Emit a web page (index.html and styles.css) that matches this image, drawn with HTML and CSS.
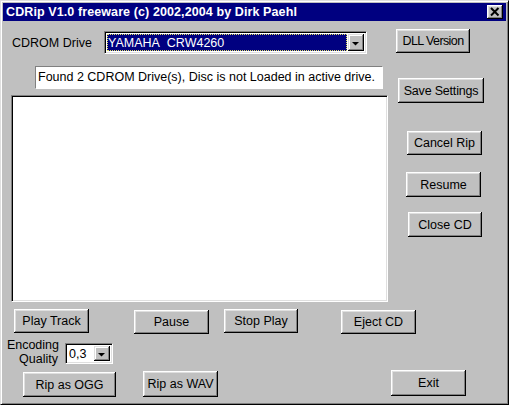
FILE: index.html
```html
<!DOCTYPE html>
<html>
<head>
<meta charset="utf-8">
<link rel="stylesheet" href="styles.css">
</head>
<body>
<div class="window">
  <div class="titlebar">
    <span class="title">CDRip V1.0 freeware (c) 2002,2004 by Dirk Paehl</span>
    <span class="close"><svg width="16" height="14" viewBox="0 0 16 14"><path d="M4 3 L11.5 10.5 M11.5 3 L4 10.5" stroke="#000" stroke-width="2" fill="none"/></svg></span>
  </div>
  <div class="client">
    <div class="top">
      <div class="leftcol">
        <div class="drive-row">
          <span class="drive-label">CDROM Drive</span>
          <div class="combo drive-combo">
            <div class="combo-field"><span class="sel">YAMAHA&nbsp; CRW4260</span></div>
            <span class="drop"><svg width="16" height="19" viewBox="0 0 16 19"><path d="M4 8 H11 L7.5 11.5 Z" fill="#000"/></svg></span>
          </div>
        </div>
        <div class="status">Found 2 CDROM Drive(s), Disc is not Loaded in active drive.</div>
        <div class="listbox"></div>
      </div>
      <div class="rightcol">
        <button class="btn btn-dll">DLL Version</button>
        <button class="btn btn-save">Save Settings</button>
        <button class="btn btn-cancel">Cancel Rip</button>
        <button class="btn btn-resume">Resume</button>
        <button class="btn btn-closecd">Close CD</button>
      </div>
    </div>
    <div class="row row-play">
      <button class="btn btn-play">Play Track</button>
      <button class="btn btn-pause">Pause</button>
      <button class="btn btn-stop">Stop Play</button>
      <button class="btn btn-eject">Eject CD</button>
    </div>
    <div class="row row-quality">
      <div class="q-label">Encoding<br><span class="q2">Quality</span></div>
      <div class="combo q-combo">
        <div class="combo-field"><span class="qval">0,3</span></div>
        <span class="drop"><svg width="16" height="17" viewBox="0 0 16 17"><path d="M4 7 H11 L7.5 10.5 Z" fill="#000"/></svg></span>
      </div>
    </div>
    <div class="row row-rip">
      <button class="btn btn-ogg">Rip as OGG</button>
      <button class="btn btn-wav">Rip as WAV</button>
      <button class="btn btn-exit">Exit</button>
    </div>
  </div>
</div>
</body>
</html>
```
FILE: styles.css
```css
html, body {
  margin: 0;
  padding: 0;
  background: #c0c0c0;
}
body {
  font-family: "Liberation Sans", Arial, sans-serif;
  font-size: 12px;
  color: #000;
}
.window {
  box-sizing: border-box;
  width: 509px;
  height: 405px;
  background: #c0c0c0;
  border: 1px solid;
  border-color: #dfdfdf #000 #000 #dfdfdf;
  box-shadow: inset 1px 1px #fff, inset -1px -1px #808080;
  padding: 2px;
  overflow: hidden;
}
.titlebar {
  height: 18px;
  background: #000080;
  display: flex;
  align-items: center;
  justify-content: space-between;
}
.title {
  color: #fff;
  font-weight: bold;
  font-size: 12.5px;
  padding-left: 3px;
  letter-spacing: 0.1px;
}
.close {
  width: 16px;
  height: 14px;
  margin-right: 3px;
  background: #c0c0c0;
  box-shadow: inset -1px -1px #000, inset 1px 1px #fff, inset -2px -2px #808080, inset 2px 2px #dfdfdf;
  display: flex;
}
.client {
  height: 381px;
}
.top {
  display: flex;
  height: 281px;
}
.leftcol {
  width: 390px;
  display: flex;
  flex-direction: column;
  align-items: flex-start;
}
.rightcol {
  display: flex;
  flex-direction: column;
  align-items: flex-start;
}
.drive-row {
  margin-top: 10px;
  height: 23px;
  display: flex;
  align-items: center;
}
.drive-label {
  box-sizing: border-box;
  width: 101px;
  padding-left: 9px;
  font-size: 12.5px;
}
.combo {
  box-sizing: border-box;
  background: #fff;
  border: 1px solid;
  border-color: #808080 #fff #fff #808080;
  box-shadow: inset 1px 1px #000, inset -1px -1px #dfdfdf;
  display: flex;
  padding: 2px;
}
.drive-combo {
  width: 263px;
  height: 23px;
}
.combo-field {
  flex: 1;
  display: flex;
  align-items: center;
}
.sel {
  flex: 1;
  align-self: stretch;
  background: #000080;
  color: #fff;
  outline: 1px dotted #e0e060;
  outline-offset: -1px;
  padding-left: 1px;
  display: flex;
  align-items: center;
  font-size: 12.5px;
  margin-right: 1px;
}
.drop {
  width: 16px;
  background: #c0c0c0;
  box-shadow: inset -1px -1px #000, inset 1px 1px #dfdfdf, inset -2px -2px #808080, inset 2px 2px #fff;
  display: flex;
}
.status {
  box-sizing: border-box;
  margin: 12px 0 0 32px;
  width: 348px;
  height: 23px;
  background: #fff;
  border: 1px solid;
  border-color: #808080 #fff #fff #808080;
  padding-left: 2px;
  display: flex;
  align-items: center;
  font-size: 12.5px;
}
.listbox {
  box-sizing: border-box;
  margin: 6px 0 0 8px;
  width: 377px;
  height: 208px;
  background: #fff;
  border: 1px solid;
  border-color: #808080 #fff #fff #808080;
  box-shadow: inset 1px 1px #000, inset -1px -1px #dfdfdf;
}
.btn {
  box-sizing: border-box;
  border: none;
  padding: 0;
  background: #c0c0c0;
  box-shadow: inset -1px -1px #000, inset 1px 1px #fff, inset -2px -2px #808080, inset 2px 2px #dfdfdf;
  font-family: "Liberation Sans", Arial, sans-serif;
  font-size: 12.5px;
  color: #000;
  width: 75px;
  height: 25px;
  flex: none;
}
.btn-dll { margin: 8px 0 0 3px; width: 74px; height: 24px; letter-spacing: -0.6px; }
.btn-save { margin: 25px 0 0 5px; width: 86px; height: 25px; letter-spacing: -0.2px; }
.btn-cancel { margin: 28px 0 0 14px; width: 75px; height: 24px; }
.btn-resume { margin: 17px 0 0 13px; width: 75px; height: 25px; }
.btn-closecd { margin: 15px 0 0 15px; width: 74px; height: 25px; }
.row {
  display: flex;
  align-items: flex-start;
}
.row-play { height: 32px; }
.btn-play { margin: 7px 0 0 11px; height: 24px; }
.btn-pause { margin: 8px 0 0 45px; height: 24px; }
.btn-stop { margin: 7px 0 0 15px; width: 74px; height: 24px; }
.btn-eject { margin: 8px 0 0 43px; height: 24px; }
.row-quality { height: 33px; }
.q-label {
  box-sizing: border-box;
  width: 56px;
  margin-top: 5px;
  text-align: right;
  font-size: 12.5px;
  line-height: 13.5px;
}
.q2 { padding-right: 1px; }
.q-combo {
  margin: 9px 0 0 6px;
  width: 48px;
  height: 21px;
}
.qval {
  padding-left: 1px;
  font-size: 12.5px;
}
.btn-ogg { margin: 5px 0 0 20px; width: 93px; height: 25px; }
.btn-wav { margin: 4px 0 0 27px; width: 75px; height: 26px; }
.btn-exit { margin: 3px 0 0 173px; width: 75px; height: 26px; }
```
